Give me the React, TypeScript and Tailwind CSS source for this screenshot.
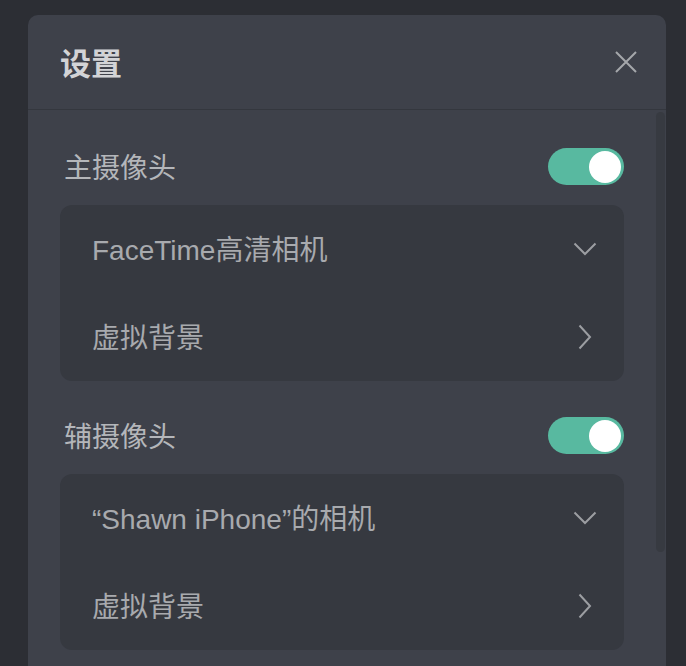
import React from "react";

const font = { fontFamily: '"Liberation Sans", "Noto Sans CJK SC", sans-serif' };

function Toggle() {
  return (
    <div className="w-[76px] h-[37px] rounded-full bg-[#58b9a0] flex items-center justify-end pr-[3px]">
      <div className="w-[32px] h-[32px] rounded-full bg-white" />
    </div>
  );
}

function ChevronDown() {
  return (
    <svg width="24" height="14" viewBox="0 0 24 14" fill="none">
      <path d="M1.5 1.5 L12 12 L22.5 1.5" stroke="#9c9ea2" strokeWidth="2" />
    </svg>
  );
}

function ChevronRight() {
  return (
    <svg width="14" height="26" viewBox="0 0 14 26" fill="none">
      <path d="M1.5 1.5 L12 13 L1.5 24.5" stroke="#9c9ea2" strokeWidth="2" />
    </svg>
  );
}

function Section({ label, camera, first }: { label: string; camera: string; first?: boolean }) {
  return (
    <div className={first ? "pt-[38px]" : "pt-[36px]"}>
      <div className="flex items-center justify-between h-[37px]">
        <span className="pl-[4px] pt-[4px] text-[28px] text-[#b4b6ba]">{label}</span>
        <Toggle />
      </div>
      <div className="mt-[20px] rounded-[12px] bg-[#363940]">
        <div className="h-[88px] flex items-center justify-between pl-[32px] pr-[27px]">
          <span className="pt-[3px] text-[28px] text-[#a8aaae]">{camera}</span>
          <ChevronDown />
        </div>
        <div className="h-[88px] flex items-center justify-between pl-[32px] pr-[32px]">
          <span className="pt-[4px] text-[28px] text-[#a8aaae]">虚拟背景</span>
          <ChevronRight />
        </div>
      </div>
    </div>
  );
}

export default function App() {
  return (
    <div className="h-[666px] overflow-hidden bg-[#2c2e34] pt-[15px] pl-[28px] pr-[20px]" style={font}>
      <div className="h-[700px] rounded-t-[10px] bg-[#3e414a] flex flex-col">
        <div className="h-[95px] flex items-center justify-between pl-[32px] pr-[29px] border-b border-[#34373e] shrink-0">
          <h1 className="pt-[6px] text-[31px] font-bold text-[#d2d3d6]">设置</h1>
          <svg width="22" height="22" viewBox="0 0 22 22" fill="none">
            <path d="M1 1 L21 21 M21 1 L1 21" stroke="#a5a7ab" strokeWidth="2" />
          </svg>
        </div>
        <div className="relative flex-1 pl-[32px] pr-[42px]">
          <div className="absolute right-[1px] top-[2px] w-[9px] h-[440px] rounded-full bg-[#373a41]" />
          <Section label="主摄像头" camera="FaceTime高清相机" first />
          <Section label="辅摄像头" camera="“Shawn iPhone”的相机" />
        </div>
      </div>
    </div>
  );
}
